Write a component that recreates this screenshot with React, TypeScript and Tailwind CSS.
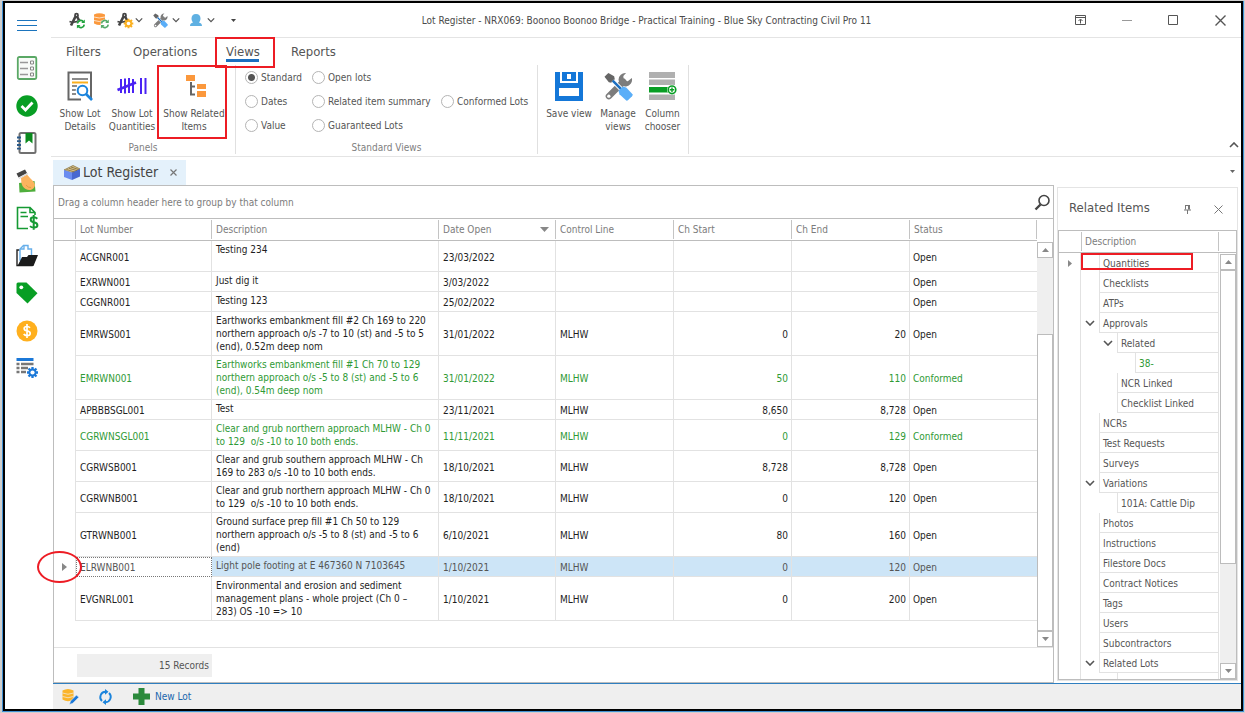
import React from "react";

type Lot = {
  id: string;
  desc: string;
  date: string;
  line?: string;
  start?: string;
  end?: string;
  status: string;
  selected?: boolean;
};

const lots: Lot[] = [
  { id: "ACGNR001", desc: "Testing 234\n ", date: "23/03/2022", status: "Open" },
  { id: "EXRWN001", desc: "Just dig it", date: "3/03/2022", status: "Open" },
  { id: "CGGNR001", desc: "Testing 123", date: "25/02/2022", status: "Open" },
  { id: "EMRWS001", desc: "Earthworks embankment fill #2 Ch 169 to 220\nnorthern approach o/s -7 to 10 (st) and -5 to 5\n(end), 0.52m deep nom", date: "31/01/2022", line: "MLHW", start: "0", end: "20", status: "Open" },
  { id: "EMRWN001", desc: "Earthworks embankment fill #1 Ch 70 to 129\nnorthern approach o/s -5 to 8 (st) and -5 to 6\n(end), 0.54m deep nom", date: "31/01/2022", line: "MLHW", start: "50", end: "110", status: "Conformed" },
  { id: "APBBBSGL001", desc: "Test", date: "23/11/2021", line: "MLHW", start: "8,650", end: "8,728", status: "Open" },
  { id: "CGRWNSGL001", desc: "Clear and grub northern approach MLHW - Ch 0\nto 129  o/s -10 to 10 both ends.", date: "11/11/2021", line: "MLHW", start: "0", end: "129", status: "Conformed" },
  { id: "CGRWSB001", desc: "Clear and grub southern approach MLHW - Ch\n169 to 283 o/s -10 to 10 both ends.", date: "18/10/2021", line: "MLHW", start: "8,728", end: "8,728", status: "Open" },
  { id: "CGRWNB001", desc: "Clear and grub northern approach MLHW - Ch 0\nto 129  o/s -10 to 10 both ends.", date: "18/10/2021", line: "MLHW", start: "0", end: "120", status: "Open" },
  { id: "GTRWNB001", desc: "Ground surface prep fill #1 Ch 50 to 129\nnorthern approach o/s -5 to 8 (st) and -5 to 6\n(end)", date: "6/10/2021", line: "MLHW", start: "80", end: "160", status: "Open" },
  { id: "ELRWNB001", desc: "Light pole footing at E 467360 N 7103645", date: "1/10/2021", line: "MLHW", start: "0", end: "120", status: "Open", selected: true },
  { id: "EVGNRL001", desc: "Environmental and erosion and sediment\nmanagement plans - whole project (Ch 0 –\n283) OS -10 => 10", date: "1/10/2021", line: "MLHW", start: "0", end: "200", status: "Open" },
];

type Node = { label: string; level: number; open?: boolean; green?: boolean; current?: boolean };

const nodes: Node[] = [
  { label: "Quantities", level: 0, current: true },
  { label: "Checklists", level: 0 },
  { label: "ATPs", level: 0 },
  { label: "Approvals", level: 0, open: true },
  { label: "Related", level: 1, open: true },
  { label: "38-", level: 2, green: true },
  { label: "NCR Linked", level: 1 },
  { label: "Checklist Linked", level: 1 },
  { label: "NCRs", level: 0 },
  { label: "Test Requests", level: 0 },
  { label: "Surveys", level: 0 },
  { label: "Variations", level: 0, open: true },
  { label: "101A: Cattle Dip", level: 1 },
  { label: "Photos", level: 0 },
  { label: "Instructions", level: 0 },
  { label: "Filestore Docs", level: 0 },
  { label: "Contract Notices", level: 0 },
  { label: "Tags", level: 0 },
  { label: "Users", level: 0 },
  { label: "Subcontractors", level: 0 },
  { label: "Related Lots", level: 0, open: true },
  { label: "", level: 1 },
];

const Chevron = ({ className = "" }: { className?: string }) => (
  <svg width="10" height="6" viewBox="0 0 10 6" className={className} fill="none" stroke="#555" strokeWidth="1.6">
    <path d="M1 1l4 4 4-4" />
  </svg>
);

const Compass = () => (
  <g stroke="#444" fill="none">
    <path d="M6.500 4.500L2 13.500" strokeWidth="2.600" />
    <path d="M8 4.500L11.500 11" strokeWidth="2.600" />
    <circle cx="7.500" cy="3.200" r="1.500" strokeWidth="1.800" />
    <path d="M.5 9.500c3 1.200 7 .8 11-1.500" strokeWidth="1.500" />
  </g>
);

const Refresh = ({ color }: { color: string }) => (
  <g fill="none" stroke={color} strokeWidth="1.700">
    <path d="M8.500 11.500a3.300 3.300 0 0 1 6-1.600" />
    <path d="M15.200 12.600a3.300 3.300 0 0 1-6 1.600" />
    <path d="M15.800 7.400v3.600h-3.600zM7.900 16.600V13h3.600z" fill={color} stroke="none" />
  </g>
);

const Gear = ({ cx, cy, r, color }: { cx: number; cy: number; r: number; color: string }) => (
  <g>
    <g stroke={color} strokeWidth={r * 0.42}>
      <path d={`M${cx - r} ${cy}h${2 * r}M${cx} ${cy - r}v${2 * r}`} />
      <path d={`M${cx - r * 0.72} ${cy - r * 0.72}l${r * 1.44} ${r * 1.44}M${cx + r * 0.72} ${cy - r * 0.72}l${-r * 1.44} ${r * 1.44}`} />
    </g>
    <circle cx={cx} cy={cy} r={r * 0.72} fill={color} />
    <circle cx={cx} cy={cy} r={r * 0.38} fill="#fff" />
  </g>
);

const Tools = ({ size }: { size: number }) => (
  <svg width={size} height={size} viewBox="0 0 30 30">
    <path d="M5 25L20 10" stroke="#7c7c7c" strokeWidth="6.500" strokeLinecap="round" />
    <path d="M28.800 6.200a7 7 0 1 1-6-5.200l-2.800 3.200.4 4.600 4.200.8z" fill="#7c7c7c" />
    <circle cx="5" cy="25" r="1.700" fill="#fff" />
    <path d="M.5 5L4.500 1l6 3.500 1 4.500-2.500 2.500L5 10.500z" fill="#666" />
    <path d="M9 9l9 9" stroke="#fff" strokeWidth="4.500" />
    <path d="M9 9l9 9" stroke="#1c6fc0" strokeWidth="2.600" />
    <path d="M15 19.500l4.500-4.500 3.500 1 6.500 7q.5 1-.5 2l-4 4q-1 1-2 .5l-7-6.500z" fill="#5aaef8" />
  </svg>
);

const sideIcons: { name: string; art: React.ReactNode }[] = [
  {
    name: "Checklists",
    art: (
      <>
        <rect x="2.800" y="1" width="18.500" height="22" rx="1.500" fill="#f8fbf8" stroke="#5aa865" strokeWidth="1.800" />
        <path d="M5 6.500h8M5 12.500h8M5 18.500h8" stroke="#999" strokeWidth="1.300" />
        <path d="M15.500 5h3v3h-3zM15.500 11h3v3h-3zM15.500 17h3v3h-3z" fill="none" stroke="#888" />
      </>
    ),
  },
  {
    name: "Approvals",
    art: (
      <>
        <circle cx="12" cy="12" r="10.700" fill="#089e24" />
        <path d="M6.500 12l4 4 7-7.500" fill="none" stroke="#fff" strokeWidth="2.800" />
      </>
    ),
  },
  {
    name: "Notebook",
    art: (
      <>
        <rect x="4.500" y="2" width="16" height="20" rx="1.500" fill="#fff" stroke="#707070" strokeWidth="2" />
        <path d="M10.500 2h7v10.500L14 9.500l-3.500 3z" fill="#0b8a1e" />
        <path d="M2 6.500h4M2 10.200h4M2 14h4M2 17.700h4" stroke="#2a5a8a" strokeWidth="1.800" />
      </>
    ),
  },
  {
    name: "Payments",
    art: (
      <>
        <path d="M4 14l15.500-2 1 10.500-16 1z" fill="#4fae3c" />
        <path d="M6 9l6-3.500 3 3.500q4.500 4 5 7-.5 4-4.500 5-5 .5-8-4Q6 14 6 9z" fill="#fbb35e" />
        <path d="M11 16q2 3 5 2.500" fill="none" stroke="#e39a48" />
        <path d="M1.500 4.500l8.500-4 2 3.500L3.500 8.500z" fill="#444" />
        <path d="M4 9.500l9-5" stroke="#d8d8d8" strokeWidth="1.400" />
      </>
    ),
  },
  {
    name: "Claims",
    art: (
      <>
        <path d="M13 22.500H2.500v-21H15l5 5v2.500M15 1.500v5h5M5.500 6.500h6M5.500 10.500h7.500" fill="none" stroke="#159a33" strokeWidth="1.600" />
        <path d="M22.300 12.700q-1.300-1.400-3.600-1.400-3 0-3 2.300t3 2.700q3.700.4 3.700 3 0 2.300-3.500 2.300-2.500 0-3.900-1.500M18.700 9v14.800" fill="none" stroke="#159a33" strokeWidth="2" />
      </>
    ),
  },
  {
    name: "Filestore",
    art: (
      <>
        <path d="M4.500 6H2v15.500h15V13" fill="none" stroke="#222" strokeWidth="1.400" />
        <path d="M5 16V5l3.500-3.500H13V5h3.500v11z" fill="#fff" stroke="#66aeea" strokeWidth="1.400" />
        <path d="M9 1.500V5H5" fill="none" stroke="#66aeea" strokeWidth="1.300" />
        <path d="M7 13h5l1.500-2H23l-4.500 11H2.500z" fill="#1b1b1b" />
      </>
    ),
  },
  {
    name: "Tags",
    art: (
      <>
        <path d="M1.500 3q0-1.500 1.500-1.500h8.500L22.500 12.300 12.500 22.500 1.500 12z" fill="#089e24" />
        <circle cx="6.300" cy="6.300" r="1.900" fill="#fff" />
      </>
    ),
  },
  {
    name: "Costs",
    art: (
      <>
        <circle cx="12" cy="12" r="10.500" fill="#ffb01e" />
        <path d="M15 8.800q-1-1.300-3-1.300-2.800 0-2.800 2t2.800 2.400q3.200.5 3.200 2.500 0 2.200-3.200 2.200-2.200 0-3.300-1.500M12 5v14" fill="none" stroke="#fff" strokeWidth="1.700" />
      </>
    ),
  },
  {
    name: "Register settings",
    art: (
      <>
        <path d="M1.500 3.500h17" stroke="#1b78d8" strokeWidth="3" />
        <path d="M1.500 8h3M6 8h12.500M1.500 12h3M6 12h7M1.500 16h3M6 16h5" stroke="#777" strokeWidth="2.400" />
        <Gear cx={17.500} cy={16.500} r={5.500} color="#1b78d8" />
      </>
    ),
  },
];

const Sidebar = () => (
  <nav className="flex w-[46px] shrink-0 flex-col items-center pt-[14px] pr-[2px]" aria-label="Registers">
    <button aria-label="Menu" className="mb-[23px] flex h-4 w-5 flex-col justify-center gap-1">
      <span className="h-px w-full bg-[#1b74bd]" />
      <span className="h-px w-full bg-[#1b74bd]" />
      <span className="h-px w-full bg-[#1b74bd]" />
    </button>
    <div className="flex h-[324px] flex-col justify-between">
      {sideIcons.map((i) => (
        <button key={i.name} aria-label={i.name} className="block size-6">
          <svg width="24" height="24" viewBox="0 0 24 24">{i.art}</svg>
        </button>
      ))}
    </div>
  </nav>
);

const TitleBar = () => (
  <header className="flex h-[35px] items-center border-b border-[#e4e4e4] pr-[15px] pl-[18px]">
    <div className="flex items-center">
      <button aria-label="Refresh tools" className="w-6">
        <svg width="17" height="17" viewBox="0 0 17 17"><Compass /><circle cx="12" cy="12" r="4.200" fill="#fff" /><Refresh color="#1fa23c" /></svg>
      </button>
      <button aria-label="Refresh data" className="w-6">
        <svg width="17" height="17" viewBox="0 0 17 17">
          <path d="M1 2.500q5-2.500 11 0v9q-5 3-11 0z" fill="#fb983c" />
          <path d="M1 5q5 2 11 0M1 8.500q5 2 11 0" stroke="#fff" strokeWidth=".7" fill="none" />
          <circle cx="12" cy="12" r="4.500" fill="#fff" />
          <Refresh color="#55ab68" />
        </svg>
      </button>
      <button aria-label="Tool options" className="flex w-9 items-center gap-px">
        <svg width="17" height="17" viewBox="0 0 17 17"><Compass /><Gear cx={11.500} cy={11.500} r={4.800} color="#fbb01e" /></svg>
        <Chevron className="w-2" />
      </button>
      <button aria-label="Settings" className="flex w-9 items-center gap-1">
        <Tools size={15} />
        <Chevron className="w-2" />
      </button>
      <button aria-label="User" className="flex w-10 items-center gap-1">
        <svg width="14" height="14" viewBox="0 0 14 14" fill="#5fb0e2"><path d="M7 1c3 0 4.500 2 4.500 4.500 0 1.800-.8 3.200-1.500 4 1.500.5 3 1 3 3.500H1c0-2.500 1.500-3 3-3.500-.7-.8-1.500-2.200-1.500-4C2.500 3 4 1 7 1z" /></svg>
        <Chevron className="w-2" />
      </button>
      <button aria-label="Customise toolbar" className="px-0.5">
        <svg width="5" height="3" viewBox="0 0 5 3"><path d="M0 0h5L2.500 3z" fill="#444" /></svg>
      </button>
    </div>
    <h1 className="flex-1 pr-5 text-center text-[10px] whitespace-nowrap text-[#4a4a4a]">
      Lot Register - NRX069: Boonoo Boonoo Bridge - Practical Training - Blue Sky Contracting Civil Pro 11
    </h1>
    <div className="flex items-center gap-9 text-[#555]">
      <button aria-label="Ribbon display">
        <svg width="11" height="10" viewBox="0 0 11 10" fill="none" stroke="#555"><path d="M.5.500h10v9H.5zM.5 2.500h10M5.500 8.500v-4M3.500 6l2-2 2 2" /></svg>
      </button>
      <button aria-label="Minimise">
        <svg width="10" height="10" viewBox="0 0 10 10" stroke="#999"><path d="M0 5.500h10" /></svg>
      </button>
      <button aria-label="Maximise">
        <svg width="11" height="11" viewBox="0 0 11 11" fill="none" stroke="#555"><path d="M.5.500h9v9h-9z" /></svg>
      </button>
      <button aria-label="Close">
        <svg width="11" height="11" viewBox="0 0 11 11" stroke="#555" strokeWidth="1.400"><path d="M.5.500l10 10M10.500.500l-10 10" /></svg>
      </button>
    </div>
  </header>
);

const RibbonButton = ({ icon, lines, className = "", marked }: { icon: React.ReactNode; lines: string[]; className?: string; marked?: boolean }) => (
  <button className={`relative flex flex-col items-center text-[10px] leading-[13px] whitespace-nowrap text-[#555] ${className}`}>
    <span className="flex h-[34px] items-center">{icon}</span>
    <span className="mt-1">{lines[0]}</span>
    {lines[1] && <span>{lines[1]}</span>}
    {marked && <span className="absolute -top-1 left-[-1px] h-[74px] w-[70px] border-2 border-[#ed1c24]" />}
  </button>
);

const Radio = ({ label, on }: { label: string; on?: boolean }) => (
  <label className="flex h-6 items-center gap-[3px] text-[10px] whitespace-nowrap text-[#555]">
    <input
      type="radio"
      name="view"
      defaultChecked={on}
      className="size-[13px] appearance-none rounded-full border border-[#b4b4b4] bg-white checked:bg-[radial-gradient(circle,#555_3px,#fff_4px)]"
    />
    {label}
  </label>
);

const Ribbon = () => (
  <section className="flex h-[119px] flex-col border-b border-[#e4e4e4]">
    <div role="tablist" className="flex h-[27px] items-center pl-[15px] text-[13px] text-[#555]">
      <button role="tab" className="w-[67px] text-left">Filters</button>
      <button role="tab" className="w-[93px] text-left">Operations</button>
      <button role="tab" aria-selected className="relative mr-[31px] w-[34px] text-left">
        Views
        <span className="absolute -bottom-px left-0 h-[3px] w-[33px] bg-[#1b6fc0]" />
        <span className="absolute -top-[5px] left-[-11px] h-[31px] w-[60px] border-2 border-[#ed1c24]" />
      </button>
      <button role="tab" className="text-left">Reports</button>
    </div>
    <div className="flex h-[89px] text-[10px] text-[#555]">
      <div className="flex w-[185px] flex-col justify-between border-r border-[#e0e0e0] pt-1">
        <div className="flex pl-[3px]">
          <RibbonButton
            className="w-[52px]"
            lines={["Show Lot", "Details"]}
            icon={
              <svg width="26" height="30" viewBox="0 0 26 30" fill="none">
                <path d="M24 16V1.500H1.500v27H14" stroke="#666" strokeWidth="2" />
                <path d="M24 1.500v26" stroke="#666" strokeWidth="2" />
                <path d="M5 8h16M5 15h5M5 19h4M5 23h4" stroke="#666" strokeWidth="1.600" />
                <path d="M5 11.500h16" stroke="#fbb01e" strokeWidth="2" />
                <circle cx="15.500" cy="19.500" r="6.800" fill="#fff" />
                <circle cx="15.500" cy="19.500" r="4.800" stroke="#1b84dc" strokeWidth="2" />
                <path d="M19 23l6 6" stroke="#1b84dc" strokeWidth="2.600" />
              </svg>
            }
          />
          <RibbonButton
            className="w-[52px]"
            lines={["Show Lot", "Quantities"]}
            icon={
              <svg width="30" height="18" viewBox="0 0 30 18" stroke="#4a22f4" strokeWidth="2" fill="none">
                <path d="M4 2v14M8 1.500v15M12 1v15M16 2v14M24 1v16M28.500 1v16" />
                <path d="M.5 13L19 5.500" strokeWidth="2.600" />
              </svg>
            }
          />
          <RibbonButton
            className="w-[72px]"
            marked
            lines={["Show Related", "Items"]}
            icon={
              <svg width="20" height="22" viewBox="0 0 20 22" className="ml-1">
                <path d="M0 0h9v6H0zM11 9h9v5h-9zM11 16h9v6h-9z" fill="#fb983c" />
                <path d="M5 7v12.500h4M5 11.500h4" stroke="#666" strokeWidth="2" fill="none" />
              </svg>
            }
          />
        </div>
        <p className="text-center leading-[12px] text-[#808080]">Panels</p>
      </div>
      <div className="flex w-[302px] flex-col justify-between border-r border-[#e0e0e0]">
        <div className="grid grid-cols-[67px_129px_auto] pl-[9px]">
          <Radio label="Standard" on />
          <Radio label="Open lots" />
          <span />
          <Radio label="Dates" />
          <Radio label="Related item summary" />
          <Radio label="Conformed Lots" />
          <Radio label="Value" />
          <Radio label="Guaranteed Lots" />
        </div>
        <p className="text-center leading-[12px] text-[#808080]">Standard Views</p>
      </div>
      <div className="flex w-[151px] border-r border-[#e0e0e0] pt-1 pl-[6px]">
        <RibbonButton
          className="w-[50px]"
          lines={["Save view"]}
          icon={
            <svg width="28" height="29" viewBox="0 0 28 29">
              <path d="M0 0h5v11h18V0h5v29H0z" fill="#1477d8" />
              <path d="M7 0h14v9H7z" fill="#1477d8" />
              <path d="M12 2h4v5h-4zM4 16h20v8H4z" fill="#fff" />
            </svg>
          }
        />
        <RibbonButton className="w-[48px]" lines={["Manage", "views"]} icon={<Tools size={29} />} />
        <RibbonButton
          className="w-[41px]"
          lines={["Column", "chooser"]}
          icon={
            <svg width="28" height="28" viewBox="0 0 28 28">
              <path d="M0 0h26v6H0zM0 7.500h26v5.500H0zM0 22.500h26V28H0z" fill="#b0b0b0" />
              <path d="M0 15h19v5.500H0z" fill="#089e24" />
              <circle cx="23" cy="17.800" r="5" fill="#fff" />
              <circle cx="23" cy="17.800" r="3.800" fill="none" stroke="#089e24" strokeWidth="1.600" />
              <path d="M23 15.500v4.600M20.700 17.800h4.600" stroke="#089e24" strokeWidth="1.400" />
            </svg>
          }
        />
      </div>
      <div className="flex flex-1 items-end justify-end pr-[2px] pb-[6px]">
        <button aria-label="Collapse ribbon"><Chevron className="rotate-180" /></button>
      </div>
    </div>
  </section>
);

const ScrollButton = ({ up }: { up?: boolean }) => (
  <button aria-label={up ? "Scroll up" : "Scroll down"} className="flex h-4 w-full shrink-0 items-center justify-center border border-[#bcbcbc] bg-white">
    <svg width="7" height="4" viewBox="0 0 7 4" className={up ? "rotate-180" : ""}><path d="M0 0h7L3.500 4z" fill="#888" /></svg>
  </button>
);

const headCell = "border-r border-[#c4c4c4] pl-1 h-[19px] flex items-center justify-between";
const cell = "border-r border-b border-[#e2e2e2] pt-[2px] pb-0 pr-[3px] pl-1 align-middle";

const LotGrid = () => (
  <div className="flex min-h-0 flex-1 flex-col border border-[#bdbdbd] bg-white">
    <div className="flex h-8 shrink-0 items-center justify-between pr-[2px] pl-1 text-[10px] text-[#7c7c7c]">
      <span>Drag a column header here to group by that column</span>
      <button aria-label="Search">
        <svg width="17" height="17" viewBox="0 0 17 17" fill="none" stroke="#444"><circle cx="10" cy="6.500" r="5" strokeWidth="1.600" /><path d="M6.500 10.500l-5 5" strokeWidth="2.400" /></svg>
      </button>
    </div>
    <div className="flex min-h-0 flex-1 border-t border-[#bdbdbd]">
      <table className="w-full flex-1 table-fixed border-separate border-spacing-0 self-start text-[10px] leading-[13px] text-[#1e1e1e]">
        <colgroup>
          <col className="w-[22px]" />
          <col className="w-[136px]" />
          <col className="w-[227px]" />
          <col className="w-[117px]" />
          <col className="w-[118px]" />
          <col className="w-[118px]" />
          <col className="w-[118px]" />
          <col />
        </colgroup>
        <thead>
          <tr className="h-[22px] text-[#7c7c7c] [&>th]:border-b [&>th]:border-[#bdbdbd] [&>th]:p-0 [&>th]:font-normal">
            <th><div className={headCell} /></th>
            <th><div className={headCell}>Lot Number</div></th>
            <th><div className={headCell}>Description</div></th>
            <th>
              <div className={headCell}>
                Date Open
                <svg width="9" height="5" viewBox="0 0 9 5" className="mr-[6px]"><path d="M0 0h9L4.500 5z" fill="#888" /></svg>
              </div>
            </th>
            <th><div className={headCell}>Control Line</div></th>
            <th><div className={headCell}>Ch Start</div></th>
            <th><div className={headCell}>Ch End</div></th>
            <th><div className={headCell}>Status</div></th>
          </tr>
        </thead>
        <tbody>
          {lots.map((l) => {
            const n = l.desc.split("\n").length;
            const h = n === 1 ? "h-5" : n === 2 ? "h-[31px]" : "h-11";
            const tone = l.status === "Conformed" ? "text-[#2f9a35]" : l.selected ? "bg-[#cde5f7] text-[#555]" : "";
            return (
              <tr key={l.id} className={`${h} ${tone}`}>
                <td className="relative border-r border-[#e2e2e2] bg-white p-0">
                  {l.selected && (
                    <>
                      <svg width="5" height="8" viewBox="0 0 5 8" className="ml-2"><path d="M0 0l5 4-5 4z" fill="#888" /></svg>
                      <span className="absolute -top-[6px] left-[-17px] z-10 h-8 w-[45px] rounded-[50%] border-2 border-[#ed1c24]" />
                    </>
                  )}
                </td>
                <td className={l.selected ? "border border-dotted border-[#777] bg-white px-[3px] pt-px" : cell}>{l.id}</td>
                <td className="border-r border-b border-[#e2e2e2] px-1 py-0 align-top">
                  <div className={`${n === 1 ? "h-[18px]" : n === 2 ? "h-[30px]" : "h-[43px]"} overflow-visible pt-[2px] whitespace-pre`}>{l.desc}</div>
                </td>
                <td className={cell}>{l.date}</td>
                <td className={cell}>{l.line}</td>
                <td className={`${cell} text-right`}>{l.start}</td>
                <td className={`${cell} text-right`}>{l.end}</td>
                <td className="border-b border-[#e2e2e2] px-[3px] pt-[2px] pb-0">{l.status}</td>
              </tr>
            );
          })}
        </tbody>
      </table>
      <div className="flex w-4 shrink-0 flex-col pt-[23px]">
        <ScrollButton up />
        <div className="flex flex-1 flex-col bg-[#efefef] pt-[76px]">
          <div className="flex-1 border border-[#bcbcbc] bg-white" />
        </div>
        <ScrollButton />
      </div>
    </div>
    <div className="flex h-[35px] shrink-0 items-center border-t border-[#e2e2e2] pl-[23px]">
      <div className="h-[23px] w-[135px] bg-[#efefef] pr-[3px] text-right text-[10px] leading-[23px] text-[#555]">15 Records</div>
    </div>
  </div>
);

const indent = ["ml-0", "ml-[18px]", "ml-[36px]"];

const RelatedItems = () => (
  <aside className="mt-[2px] flex w-[181px] shrink-0 flex-col border border-[#e4e4e4] bg-white">
    <div className="flex h-[42px] shrink-0 items-center pr-[14px] pl-[11px] text-[#555]">
      <h2 className="flex-1 pb-[2px] text-[13px]">Related Items</h2>
      <button aria-label="Pin" className="mr-[23px]">
        <svg width="7" height="9" viewBox="0 0 7 9" fill="none" stroke="#777"><path d="M1 .5h5M1.500.500v4M4.500.500v4M5.500.500v4M0 5h7M3.500 5v4" /></svg>
      </button>
      <button aria-label="Close panel">
        <svg width="9" height="9" viewBox="0 0 9 9" stroke="#777"><path d="M.5.500l8 8M8.500.500l-8 8" /></svg>
      </button>
    </div>
    <div className="flex min-h-0 flex-1 flex-col border border-[#bdbdbd]">
      <div className="flex h-[22px] shrink-0 items-center border-b border-[#bdbdbd] text-[10px] text-[#7c7c7c]">
        <span className="h-[19px] w-[23px] border-r border-[#c4c4c4]" />
        <span className="flex h-[19px] flex-1 items-center border-r border-[#c4c4c4] pl-[3px]">Description</span>
        <span className="w-[17px]" />
      </div>
      <div className="flex min-h-0 flex-1">
        <ul role="tree" className="min-h-0 flex-1 overflow-hidden text-[10px] text-[#555]">
          {nodes.map((n, i) => (
            <li key={i} role="treeitem" className="relative flex h-5">
              <span className="flex w-[22px] shrink-0 items-center justify-center border-r border-[#e2e2e2]">
                {n.current && <svg width="4" height="7" viewBox="0 0 4 7"><path d="M0 0l4 3.500L0 7z" fill="#888" /></svg>}
              </span>
              <span className={`flex w-[18px] shrink-0 items-center justify-center ${indent[n.level]}`}>{n.open && <Chevron />}</span>
              <span className={`flex flex-1 items-center border-r border-b border-l border-[#e2e2e2] pt-px pl-[3px] whitespace-nowrap ${n.green ? "text-[#2f9a35]" : ""}`}>{n.label}</span>
              {n.current && <span className="absolute top-0 left-[22px] h-[17px] w-[112px] border-2 border-[#ed1c24]" />}
            </li>
          ))}
        </ul>
        <div className="ml-px flex w-4 shrink-0 flex-col pt-px">
          <ScrollButton up />
          <div className="flex flex-1 flex-col bg-[#efefef] pb-[99px]">
            <div className="flex-1 border border-[#bcbcbc] bg-white" />
          </div>
          <ScrollButton />
        </div>
      </div>
    </div>
  </aside>
);

const StatusBar = () => (
  <footer className="ml-[2px] flex h-[26px] shrink-0 items-center border-t border-[#2f7fc0] bg-[#efefef] pl-[9px]">
    <button aria-label="Edit data" className="w-9">
      <svg width="17" height="17" viewBox="0 0 17 17">
        <path d="M.5 2.500q5.500-3 11 0v9q-5.500 3.500-11 0z" fill="#fbb42a" />
        <path d="M.5 5q5.500 2.500 11 0M.5 8.500q5.500 2.500 11 0" stroke="#efefef" strokeWidth=".7" fill="none" />
        <path d="M7.500 16.500l1-3.500 6-6 2.300 2.300-6 6z" fill="#1b78d8" stroke="#efefef" strokeWidth=".6" />
      </svg>
    </button>
    <button aria-label="Refresh" className="w-[35px]">
      <svg width="15" height="16" viewBox="0 0 14 16" fill="none" stroke="#1b84dc" strokeWidth="1.900">
        <path d="M3.500 12A5.300 5.300 0 0 1 7 2.800M10.500 4a5.300 5.300 0 0 1-3.500 9.200" />
        <path d="M6.500 0l3.500 2.800-3.500 2.900zM7.500 10.300L4 13.200 7.500 16z" fill="#1b84dc" stroke="none" />
      </svg>
    </button>
    <button className="flex items-center gap-[5px] text-[10px] text-[#1b66ad]">
      <svg width="17" height="17" viewBox="0 0 17 17" fill="#2c8a3c"><path d="M5.500 0h6v5.500H17v6h-5.500V17h-6v-5.500H0v-6h5.500z" /></svg>
      New Lot
    </button>
  </footer>
);

export default function App() {
  return (
    <div className="h-screen min-h-[600px] bg-[#cfcfcf] pt-px pr-px pb-px pl-[2px] font-['DejaVu_Sans_Condensed','DejaVu_Sans',sans-serif]">
      <div className="h-full border-x border-b border-[#3f8fd2]">
        <div className="flex h-full border-2 border-black bg-white">
          <Sidebar />
          <div className="flex min-w-0 flex-1 flex-col">
            <TitleBar />
            <Ribbon />
            <div className="ml-[2px] flex min-h-0 flex-1">
              <main className="flex min-w-0 flex-1 flex-col pt-[3px]">
                <div className="flex h-[25px] w-[133px] shrink-0 items-center bg-[#e4f1fb] pl-[11px] text-[14px] text-[#444]">
                  <svg width="16" height="15" viewBox="0 0 16 15" className="mr-[3px] shrink-0">
                    <path d="M0 5l9-4.500L16 4l-8 4z" fill="#d9c48c" stroke="#8a7440" strokeWidth=".8" />
                    <path d="M0 5l8 2.500V15l-8-3z" fill="#6a8cf0" />
                    <path d="M8 7.500L16 4v7.500L8 15z" fill="#4868d0" />
                    <path d="M2.500 4.500l8 2.500M5 3.300l8 2.300M7 2l7.500 2.500" stroke="#7d6a3c" strokeWidth=".8" />
                  </svg>
                  <span className="whitespace-nowrap">Lot Register</span>
                  <button aria-label="Close tab" className="ml-auto pr-[9px]">
                    <svg width="7" height="7" viewBox="0 0 7 7" className="block" stroke="#777" strokeWidth="1.200"><path d="M.5.500l6 6M6.500.500l-6 6" /></svg>
                  </button>
                </div>
                <LotGrid />
              </main>
              <div className="ml-[3px] flex flex-col pr-[3px] pb-[2px]">
                <div className="flex h-[28px] shrink-0 items-center justify-end pr-[3px]">
                  <button aria-label="Open documents">
                    <svg width="5" height="3" viewBox="0 0 5 3"><path d="M0 0h5L2.500 3z" fill="#666" /></svg>
                  </button>
                </div>
                <div className="flex min-h-0 flex-1"><RelatedItems /></div>
              </div>
            </div>
            <StatusBar />
          </div>
        </div>
      </div>
    </div>
  );
}
